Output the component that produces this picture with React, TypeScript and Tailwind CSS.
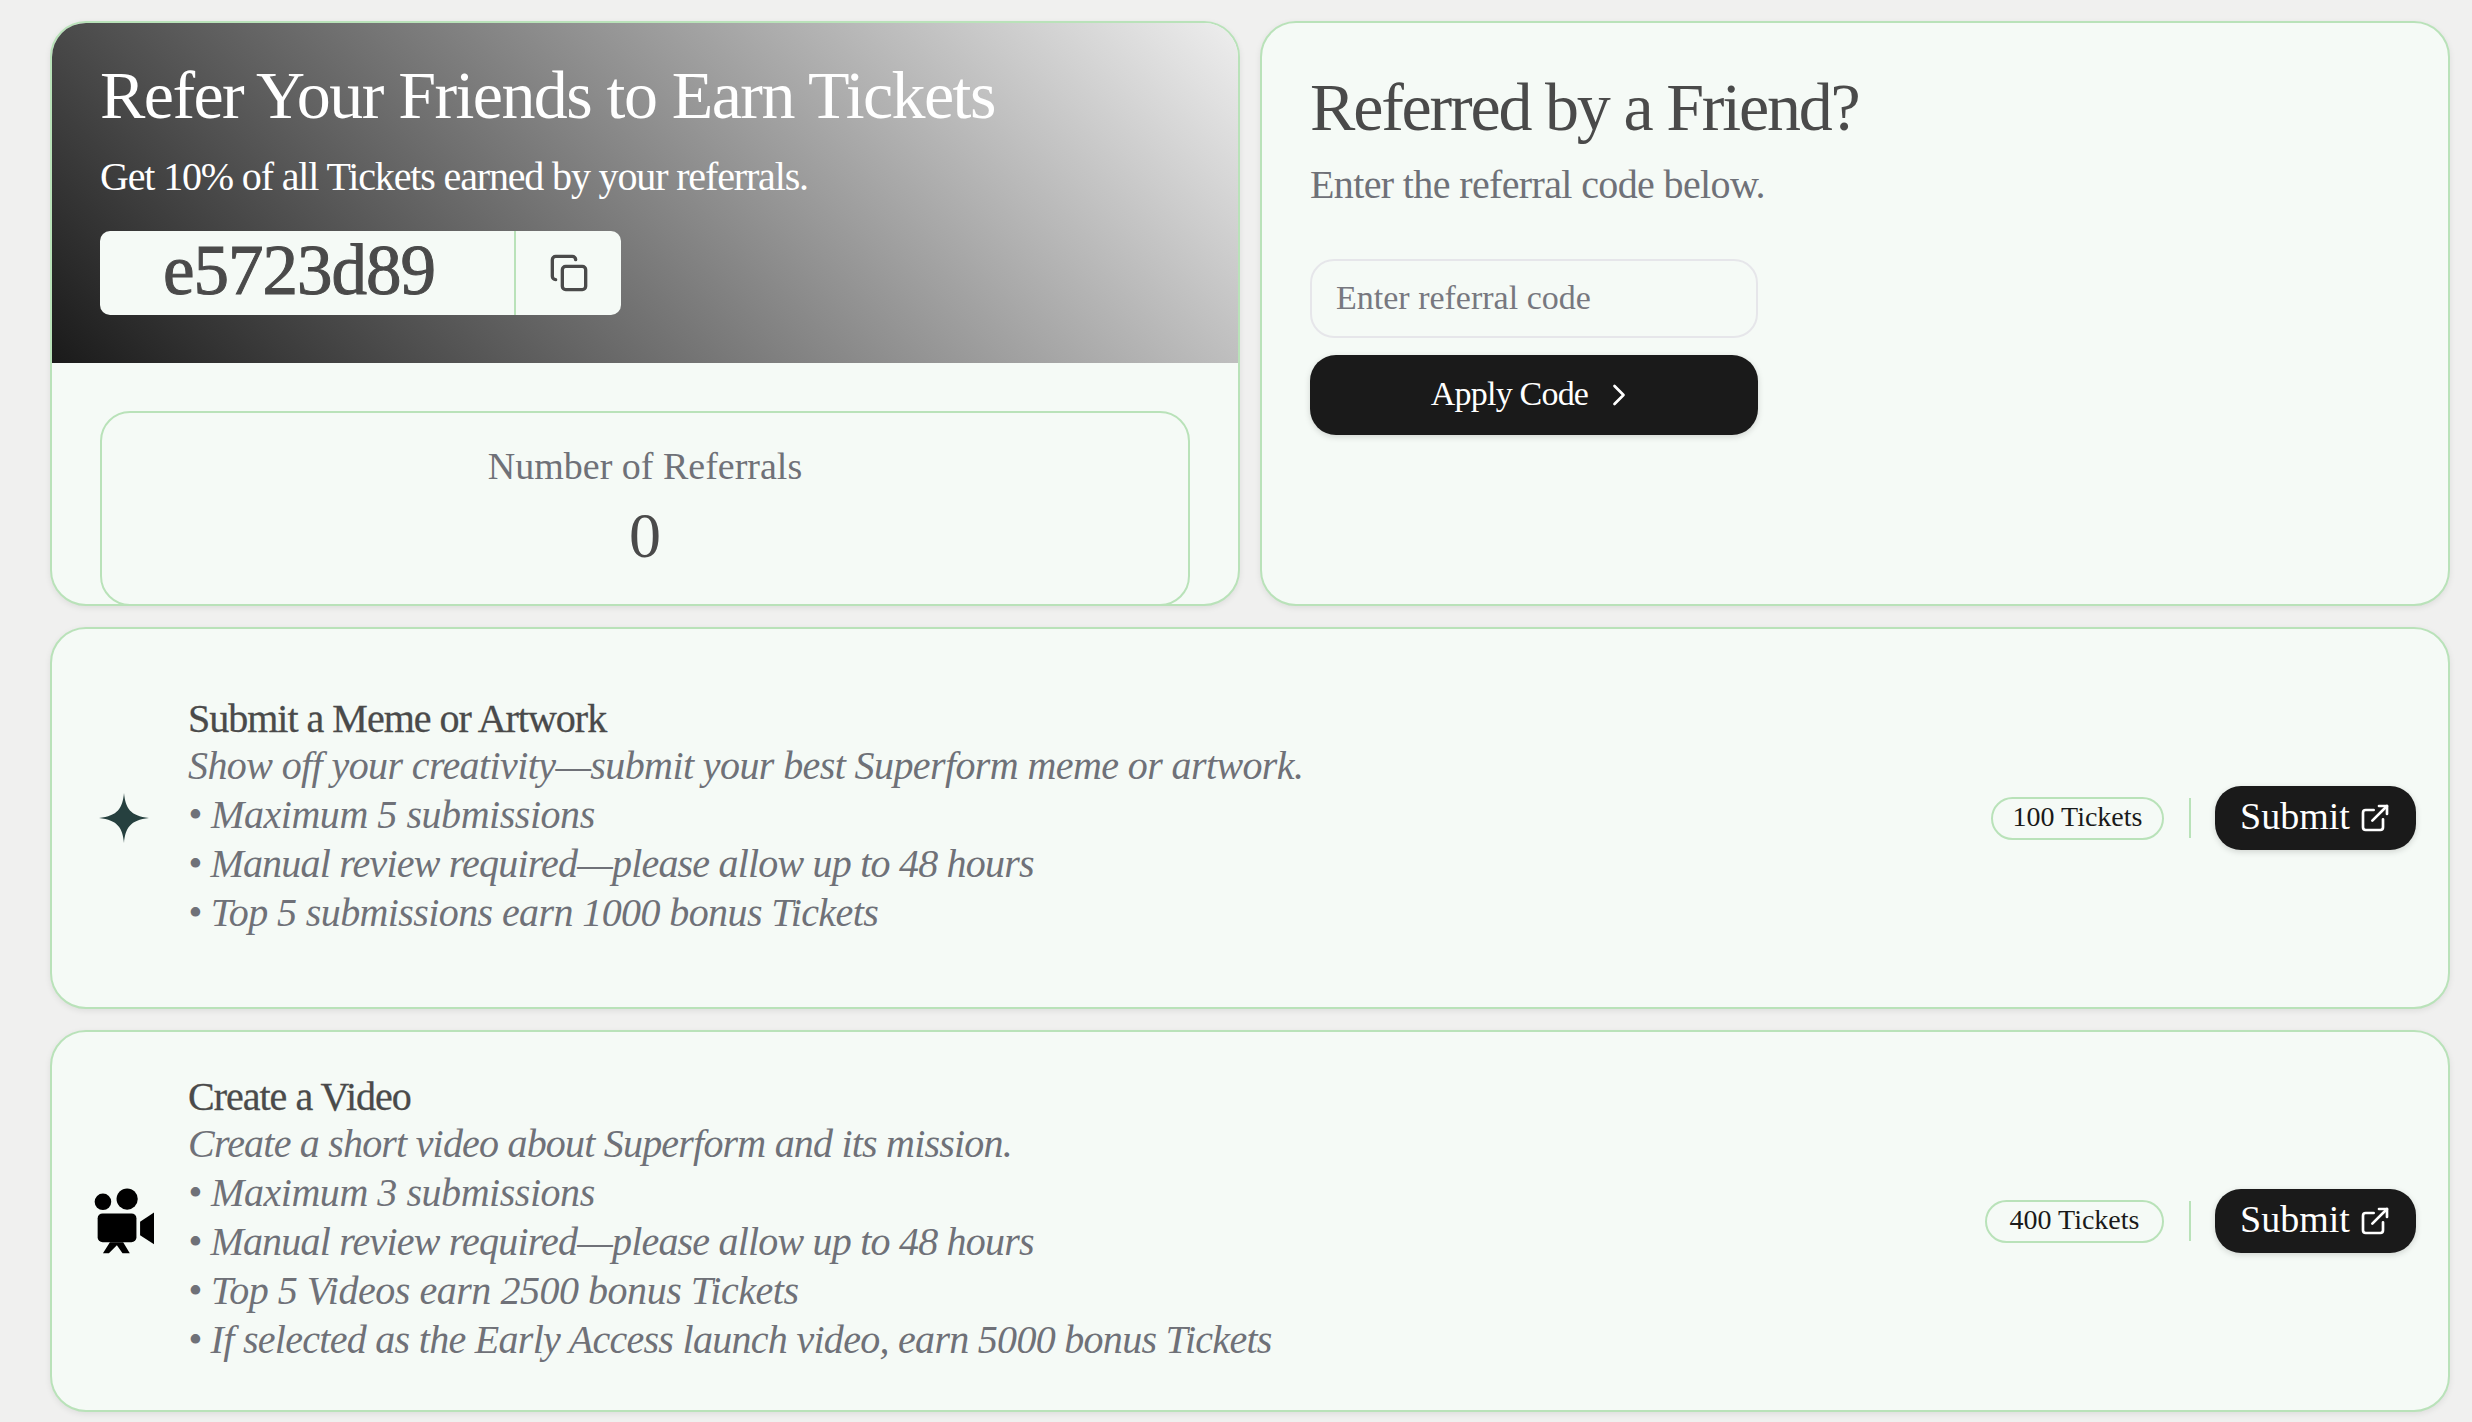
import { ChevronRight, Copy, ExternalLink } from "lucide-react";

function StarIcon() {
  return (
    <svg width="50" height="50" viewBox="0 0 50 50" className="shrink-0">
      <path
        d="M25 0C26.5 15 31 23 50 25C31 27 26.5 35 25 50C23.5 35 19 27 0 25C19 23 23.5 15 25 0Z"
        fill="#26403f"
      />
    </svg>
  );
}

function VideoIcon() {
  return (
    <svg width="60" height="66" viewBox="70 54 181 198" className="shrink-0">
      <circle cx="97" cy="95" r="25" fill="#000" />
      <circle cx="170" cy="87" r="32" fill="#000" />
      <rect x="81" y="130" width="117" height="87" rx="15" fill="#000" />
      <path d="M209 155L251 127V223L209 196Z" fill="#000" />
      <path
        d="M118 217L97 250H115L139 226L156 250H178L158 217Z"
        fill="#000"
      />
    </svg>
  );
}

function TaskCard({
  icon,
  title,
  lines,
  tickets,
  pillClass
}: {
  icon: React.ReactNode;
  title: string;
  lines: { text: string; tracking: string }[];
  tickets: string;
  pillClass: string;
}) {
  return (
    <div className="flex h-[382px] items-center justify-between rounded-[36px] border-2 border-[#b9e2b9] bg-[#f5faf6] pl-[42px] pr-[32px] shadow-[0_2px_6px_rgba(0,0,0,0.08)]">
      <div className="flex items-center">
        <div className="flex w-[60px] justify-center">{icon}</div>
        <div className="ml-[34px] pb-[8px]">
          <h3 className="h-[49px] pt-[2px] text-[40px] leading-[49px] tracking-[-1px] text-[#4a4a4a] [-webkit-text-stroke:0.3px_#4a4a4a]">
            {title}
          </h3>
          {lines.map((line) => (
            <p
              key={line.text}
              className={`text-[40px] italic leading-[49px] text-[#6f7178] ${line.tracking}`}
            >
              {line.text}
            </p>
          ))}
        </div>
      </div>
      <div className="flex items-center">
        <span
          className={`flex h-[43px] items-center justify-center rounded-full border-2 border-[#b9e2b9] pb-[3px] text-[28px] text-[#1a1a1a] ${pillClass}`}
        >
          {tickets}
        </span>
        <span className="ml-[25px] mr-[24px] h-[40px] w-[2px] bg-[#b9e2b9]" />
        <button className="flex h-[64px] w-[201px] items-center justify-center gap-[9px] rounded-[26px] bg-[#1a1a1a] text-[38px] text-white shadow-[0_2px_6px_rgba(0,0,0,0.15)]">
          <span className="pb-[3px]">Submit</span>
          <ExternalLink size={32} strokeWidth={2} />
        </button>
      </div>
    </div>
  );
}

export default function App() {
  return (
    <div className="flex min-h-[1422px] flex-col gap-[21px] overflow-hidden bg-[#f0f0ef] pb-[10px] pl-[50px] pr-[22px] pt-[21px] font-['Liberation_Serif',serif]">
      <div className="flex gap-[20px]">
        <div className="flex h-[585px] w-[1190px] flex-col overflow-hidden rounded-[36px] border-2 border-[#b9e2b9] bg-[#f5faf6] shadow-[0_2px_6px_rgba(0,0,0,0.08)]">
          <div className="h-[340px] shrink-0 bg-[linear-gradient(45deg,#1a1a1a,#eeeeee)] pl-[48px] pt-[37px]">
            <h1 className="text-[68px] leading-[70px] tracking-[-1.57px] text-white">
              Refer Your Friends to Earn Tickets
            </h1>
            <p className="mt-[22px] text-[40px] leading-[50px] tracking-[-1.15px] text-white">
              Get 10% of all Tickets earned by your referrals.
            </p>
            <div className="mt-[29px] flex h-[84px] w-[521px] items-center rounded-[10px] bg-[#f5faf6]">
              <div className="flex h-full w-[416px] items-center justify-center border-r-2 border-[#b9e2b9] pb-[6px] pr-[16px] text-[71px] tracking-[-1px] text-[#4a4a4a] [-webkit-text-stroke:1px_#4a4a4a]">
                e5723d89
              </div>
              <div className="flex flex-1 items-center justify-center text-[#4a4a4a]">
                <Copy size={40} strokeWidth={2} />
              </div>
            </div>
          </div>
          <div className="flex-1 pl-[48px] pr-[48px] pt-[48px]">
            <div className="h-[195px] rounded-[30px] border-2 border-[#b9e2b9] pt-[28px] text-center">
              <p className="text-[38px] leading-[50px] text-[#6f7178]">
                Number of Referrals
              </p>
              <p className="mt-[10px] text-[64px] leading-[70px] text-[#4a4a4a]">
                0
              </p>
            </div>
          </div>
        </div>

        <div className="h-[585px] flex-1 rounded-[36px] border-2 border-[#b9e2b9] bg-[#f5faf6] pl-[48px] pt-[49px] shadow-[0_2px_6px_rgba(0,0,0,0.08)]">
          <h2 className="text-[68px] leading-[70px] tracking-[-2.2px] text-[#4a4a4a]">
            Referred by a Friend?
          </h2>
          <p className="mt-[18px] text-[40px] leading-[50px] tracking-[-0.63px] text-[#6f7178]">
            Enter the referral code below.
          </p>
          <div className="mt-[49px] w-[448px]">
            <div className="flex h-[79px] items-center rounded-[24px] border-2 border-[#e6e6ea] pb-[2px] pl-[24px] text-[34px] text-[#77787f]">
              Enter referral code
            </div>
            <button className="mt-[17px] flex h-[80px] w-full items-center justify-center gap-[13px] rounded-[26px] bg-[#1a1a1a] text-[34px] tracking-[-0.8px] text-white shadow-[0_2px_6px_rgba(0,0,0,0.15)]">
              <span className="pb-[3px]">Apply Code</span>
              <ChevronRight size={36} strokeWidth={1.8} />
            </button>
          </div>
        </div>
      </div>

      <TaskCard
        icon={<StarIcon />}
        title="Submit a Meme or Artwork"
        lines={[
          {
            text: "Show off your creativity—submit your best Superform meme or artwork.",
            tracking: "tracking-[-0.6px]"
          },
          { text: "• Maximum 5 submissions", tracking: "tracking-[-0.46px]" },
          {
            text: "• Manual review required—please allow up to 48 hours",
            tracking: "tracking-[-0.8px]"
          },
          {
            text: "• Top 5 submissions earn 1000 bonus Tickets",
            tracking: "tracking-[-0.6px]"
          }
        ]}
        tickets="100 Tickets"
        pillClass="w-[173px]"
      />
      <TaskCard
        icon={<VideoIcon />}
        title="Create a Video"
        lines={[
          {
            text: "Create a short video about Superform and its mission.",
            tracking: "tracking-[-0.8px]"
          },
          { text: "• Maximum 3 submissions", tracking: "tracking-[-0.46px]" },
          {
            text: "• Manual review required—please allow up to 48 hours",
            tracking: "tracking-[-0.8px]"
          },
          {
            text: "• Top 5 Videos earn 2500 bonus Tickets",
            tracking: "tracking-[-0.47px]"
          },
          {
            text: "• If selected as the Early Access launch video, earn 5000 bonus Tickets",
            tracking: "tracking-[-0.71px]"
          }
        ]}
        tickets="400 Tickets"
        pillClass="w-[179px]"
      />
    </div>
  );
}
